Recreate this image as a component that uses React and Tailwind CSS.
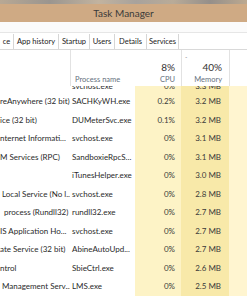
import React from 'react';

const TABS = [
  { label: 'ce', w: 'w-[14px]' },
  { label: 'App history', w: 'w-[45px]' },
  { label: 'Startup', w: 'w-[31px]' },
  { label: 'Users', w: 'w-[25px]' },
  { label: 'Details', w: 'w-[32px]' },
  { label: 'Services', w: 'w-[32px]' },
];

const ROWS = [
  { name: 'reAnywhere (32 bit)', pad: 'pl-0', proc: 'SACHKyWH.exe', cpu: '0.2%', mem: '3.2 MB' },
  { name: 'ice (32 bit)', pad: 'pl-0', proc: 'DUMeterSvc.exe', cpu: '0.1%', mem: '3.2 MB' },
  { name: 'nternet Informati...', pad: 'pl-0', proc: 'svchost.exe', cpu: '0%', mem: '3.1 MB' },
  { name: 'M Services (RPC)', pad: 'pl-0', proc: 'SandboxieRpcS...', cpu: '0%', mem: '3.1 MB' },
  { name: '', pad: 'pl-0', proc: 'iTunesHelper.exe', cpu: '0%', mem: '3.0 MB' },
  { name: 'Local Service (No l...', pad: 'pl-[2px]', proc: 'svchost.exe', cpu: '0%', mem: '2.8 MB' },
  { name: 'process (Rundll32)', pad: 'pl-[4px]', proc: 'rundll32.exe', cpu: '0%', mem: '2.7 MB' },
  { name: 'IS Application Ho...', pad: 'pl-0', proc: 'svchost.exe', cpu: '0%', mem: '2.7 MB' },
  { name: 'ate Service (32 bit)', pad: 'pl-0', proc: 'AbineAutoUpd...', cpu: '0%', mem: '2.7 MB' },
  { name: 'ntrol', pad: 'pl-0', proc: 'SbieCtrl.exe', cpu: '0%', mem: '2.6 MB' },
  { name: 'Management Serv...', pad: 'pl-[2px]', proc: 'LMS.exe', cpu: '0%', mem: '2.5 MB' },
];

const Row = ({ row }) => (
  <div className="flex h-[18.5px] items-center text-[8px] leading-none">
    <div className={`w-[70px] shrink-0 overflow-hidden whitespace-nowrap text-[#2a2a2a] ${row.pad}`}>{row.name}</div>
    <div className="w-[65px] shrink-0 overflow-hidden whitespace-nowrap pl-[2px] text-[#2a2a2a]">{row.proc}</div>
    <div className="flex h-full w-[46px] shrink-0 items-center justify-end bg-[#fdf3c6] pr-[6px] text-[#3a3a3a]">{row.cpu}</div>
    <div className="flex h-full w-[48px] shrink-0 items-center justify-end bg-[#f8e9a9] pr-[8px] text-[#3a3a3a]">{row.mem}</div>
    <div className="h-full flex-1 bg-[#fff5d0]" />
  </div>
);

export default function App() {
  return (
    <div className="h-[296px] w-[247px] overflow-hidden bg-white font-['Lato',sans-serif]">
      {/* title bar */}
      <div className="h-[4px] bg-[linear-gradient(90deg,#b8a894,#9a958f_20%,#c2b39f_40%,#a8a29c_55%,#b9ab98_70%,#958f8a_85%,#bca990)]" />
      <div className="flex h-[18px] items-center justify-center bg-[#cfaa84] text-[10px] text-[#3a3a3a]">
        Task Manager
      </div>
      {/* menu strip */}
      <div className="h-[11px] border-b border-[#e6e6e6] bg-[#fbfbfb]" />
      {/* tabs */}
      <div className="flex h-[17px] items-end border-b border-[#d9d9d9] bg-white pt-[1px]">
        {TABS.map((t) => (
          <div
            key={t.label}
            className={`flex h-full shrink-0 items-center justify-center border-r border-[#d6d6d6] text-[7.5px] text-[#222] ${t.w}`}
          >
            {t.label}
          </div>
        ))}
      </div>
      {/* column header */}
      <div className="flex h-[36px] text-[#66707e]">
        <div className="w-[70px] shrink-0" />
        <div className="flex w-[65px] shrink-0 flex-col justify-end border-l border-[#e2e2e2] pb-[1px] pl-[4px] text-[7.5px] leading-[10px]">
          <span>Process name</span>
        </div>
        <div className="flex w-[46px] shrink-0 flex-col items-end justify-end pb-[1px] pr-[6px]">
          <span className="text-[10px] leading-[12px] text-[#333]">8%</span>
          <span className="mt-[2px] text-[7.5px] leading-[10px]">CPU</span>
        </div>
        <div className="relative flex w-[48px] shrink-0 flex-col items-end justify-end border-l border-[#e2e2e2] pb-[1px] pr-[7px]">
          <span className="absolute left-[3px] top-[6px] text-[6px] leading-none text-[#999]">ˇ</span>
          <span className="text-[10px] leading-[12px] text-[#333]">40%</span>
          <span className="mt-[2px] text-[7.5px] leading-[10px]">Memory</span>
        </div>
        <div className="flex-1 border-l border-[#e2e2e2]" />
      </div>
      {/* partially scrolled row */}
      <div className="flex h-[6px] overflow-hidden text-[8px] leading-none">
        <div className="w-[70px] shrink-0" />
        <div className="w-[65px] shrink-0 pl-[2px] text-[#2a2a2a]">
          <div className="-mt-[4px]">svchost.exe</div>
        </div>
        <div className="flex w-[46px] shrink-0 justify-end bg-[#fdf3c6] pr-[6px] text-[#3a3a3a]">
          <div className="-mt-[4px]">0%</div>
        </div>
        <div className="flex w-[48px] shrink-0 justify-end bg-[#f8e9a9] pr-[8px] text-[#3a3a3a]">
          <div className="-mt-[4px]">3.3 MB</div>
        </div>
        <div className="flex-1 bg-[#fff5d0]" />
      </div>
      {ROWS.map((r, i) => (
        <Row key={i} row={r} />
      ))}
    </div>
  );
}
